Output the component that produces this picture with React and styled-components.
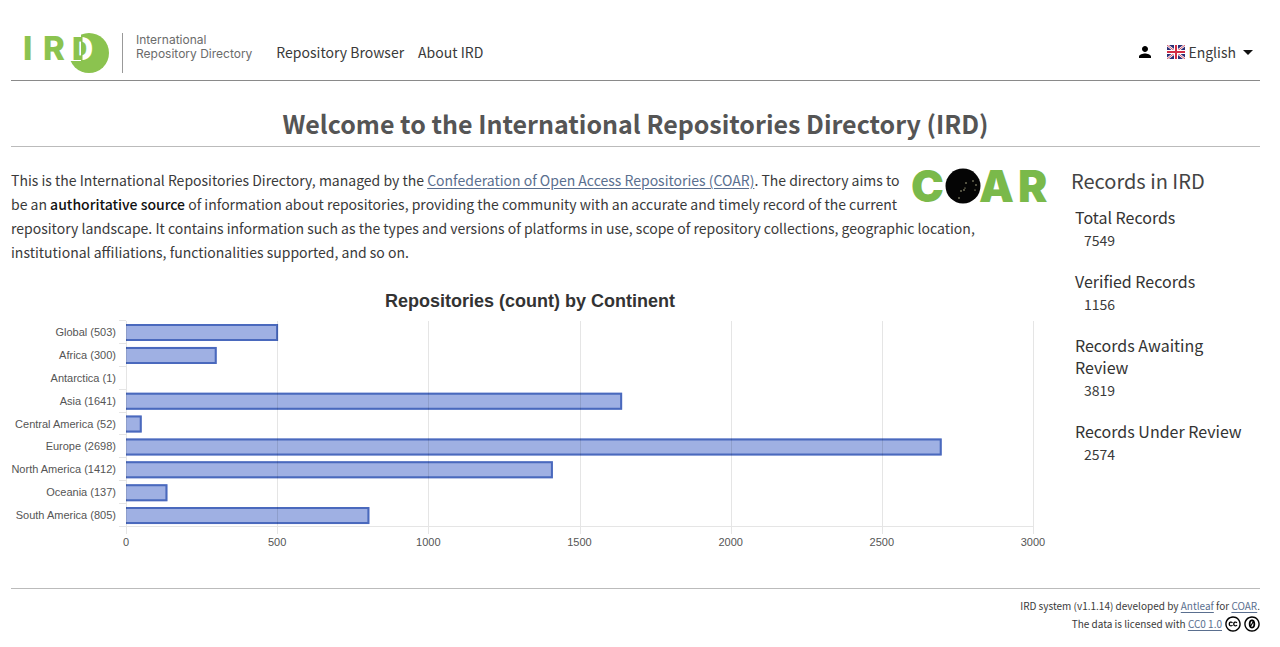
import styled, { createGlobalStyle } from "styled-components";
import { MdPerson } from "react-icons/md";
import { FaCreativeCommons, FaCreativeCommonsZero } from "react-icons/fa";

const continents = [
  { name: "Global", count: 503 },
  { name: "Africa", count: 300 },
  { name: "Antarctica", count: 1 },
  { name: "Asia", count: 1641 },
  { name: "Central America", count: 52 },
  { name: "Europe", count: 2698 },
  { name: "North America", count: 1412 },
  { name: "Oceania", count: 137 },
  { name: "South America", count: 805 },
];

const records = [
  { label: "Total Records", value: 7549 },
  { label: "Verified Records", value: 1156 },
  { label: "Records Awaiting Review", value: 3819 },
  { label: "Records Under Review", value: 2574 },
];

const ticks = [0, 500, 1000, 1500, 2000, 2500, 3000];

const GlobalStyle = createGlobalStyle`
  * {
    box-sizing: border-box;
  }
  body {
    margin: 0;
    background: #fff;
    color: #3a3a3a;
    font-family: "Noto Sans CJK SC", "Open Sans", sans-serif;
    font-size: 14px;
    line-height: 24px;
  }
`;

const Page = styled.div`
  padding: 24px 20px 12px 11px;
`;

const Header = styled.header`
  display: flex;
  align-items: center;
  height: 57px;
  border-bottom: 1px solid #8a8a8a;
`;

const Brand = styled.a`
  display: flex;
  align-items: center;
  margin: 0 24px 0 13px;
  color: #6b6b6b;
  text-decoration: none;
`;

const BrandName = styled.span`
  align-self: flex-start;
  padding-top: 2px;
  margin-left: 13px;
  font-family: Inter, sans-serif;
  font-size: 12px;
  line-height: 14px;
`;

const Nav = styled.nav`
  display: flex;
  gap: 14px;
`;

const NavLink = styled.a`
  color: #3a3a3a;
  text-decoration: none;
`;

const Tools = styled.div`
  display: flex;
  align-items: center;
  gap: 13px;
  margin-left: auto;
  margin-right: 7px;
`;

const ToolButton = styled.button`
  display: flex;
  align-items: center;
  gap: 3px;
  padding: 0;
  border: 0;
  background: none;
  color: #3a3a3a;
  font-family: inherit;
  font-size: 14px;
  line-height: 24px;
`;

const Caret = styled.span`
  margin-left: 4px;
  border: 5px solid transparent;
  border-top-color: #111;
  border-bottom: 0;
`;

const Title = styled.h1`
  margin: 0;
  padding: 24px 0 5px;
  border-bottom: 1px solid #bbb;
  color: #555;
  font-size: 25px;
  font-weight: 700;
  line-height: 36px;
  text-align: center;
`;

const Columns = styled.main`
  display: grid;
  grid-template-columns: 1fr 189px;
  gap: 20px;
  padding: 21px 0 27px;
`;

const Intro = styled.p`
  margin: 0 0 16px;
`;

const TextLink = styled.a`
  color: #5a6f8f;
  text-decoration: underline;
  text-underline-offset: 2px;
`;

const Strong = styled.strong`
  color: #111;
  font-weight: 500;
`;

const CoarMark = styled.svg`
  float: right;
  margin: 0 2px 10px 8px;
  overflow: visible;
`;

const IrdMark = styled.svg`
  overflow: visible;
`;

const Chart = styled.svg`
  display: block;
  width: 100%;
  font-family: "Liberation Sans", Arial, sans-serif;
  font-size: 11px;
  fill: #555;
`;

const ChartTitle = styled.text`
  font-size: 18px;
  font-weight: 700;
  fill: #333;
`;

const SideTitle = styled.h2`
  margin: 0 0 12px;
  color: #444;
  font-size: 20px;
  font-weight: 400;
  line-height: 26px;
`;

const Records = styled.dl`
  margin: 0 0 0 4px;
`;

const RecordLabel = styled.dt`
  color: #333;
  font-size: 16px;
  line-height: 22px;
`;

const RecordValue = styled.dd`
  margin: 0 0 18px 9px;
`;

const Footer = styled.footer`
  padding-top: 8px;
  border-top: 1px solid #bbb;
  font-size: 10px;
  line-height: 18px;
`;

const FooterLine = styled.div`
  display: flex;
  align-items: center;
  justify-content: flex-end;
  gap: 3px;
  svg {
    color: #000;
  }
`;

const IrdLogo = () => (
  <IrdMark width="99" height="42" viewBox="0 0 99 42" fontFamily="Inter, sans-serif" fontWeight="800" fontSize="33" fill="#8bc34f">
    <defs>
      <linearGradient id="split" gradientUnits="userSpaceOnUse" x1="58" x2="59" y1="0" y2="0">
        <stop offset="0" stopColor="#8bc34f" />
        <stop offset="1" stopColor="#fff" />
      </linearGradient>
    </defs>
    <circle cx="65" cy="22" r="20" />
    <path d="M44 1h13v29H44z" fill="#fff" />
    <text x="-1" y="29">I</text>
    <text x="19" y="29">R</text>
    <text x="47" y="29" fontFamily="Noto Sans CJK SC, sans-serif" fontWeight="900" fontSize="31" fill="url(#split)">
      D
    </text>
    <path d="M98.500 2v40" stroke="#999" />
  </IrdMark>
);

const CoarLogo = () => (
  <CoarMark width="137" height="36" viewBox="0 0 137 36" fontFamily="Inter, sans-serif" fontWeight="900" fontSize="44" fill="#7ab94a">
    <text x="-1" y="34">C</text>
    <text x="67" y="34">A</text>
    <text x="106" y="34">R</text>
    <circle cx="51" cy="18" r="17.500" fill="#050505" />
    <g fill="#d8d6a8">
      <circle cx="54" cy="15" r=".7" />
      <circle cx="52" cy="22" r=".7" />
      <circle cx="49" cy="23" r=".7" />
      <circle cx="53" cy="20" r=".6" />
      <circle cx="61" cy="13" r=".7" />
      <circle cx="64" cy="17" r=".7" />
      <circle cx="63" cy="22" r=".6" />
      <circle cx="47" cy="30" r=".7" />
    </g>
  </CoarMark>
);

const Flag = () => (
  <svg width="18" height="14" viewBox="0 0 18 14">
    <path d="M0 0h18v14H0z" fill="#2b2f77" />
    <path d="M0 0l18 14M18 0L0 14" stroke="#fff" strokeWidth="2.400" />
    <path d="M0 0l18 14M18 0L0 14" stroke="#d22f45" strokeWidth=".8" />
    <path d="M9 0v14M0 7h18" stroke="#fff" strokeWidth="4" />
    <path d="M9 0v14M0 7h18" stroke="#d22f45" strokeWidth="2" />
  </svg>
);

const plot = { left: 115, top: 41, width: 907, height: 206 };
const rowHeight = plot.height / continents.length;
const toX = (value) => plot.left + (value / 3000) * plot.width;

const ContinentChart = () => (
  <Chart viewBox="0 0 1040 281" role="img" aria-label="Repositories (count) by Continent">
    <ChartTitle x="519" y="27" textAnchor="middle">
      Repositories (count) by Continent
    </ChartTitle>
    {continents.map(({ name, count }, index) => {
      const top = plot.top + index * rowHeight;
      const right = toX(count);
      return (
        <g key={name}>
          <path d={`M${plot.left - 7} ${Math.round(top) - 0.5}h7`} stroke="#e5e5e5" />
          <text x="105" y={Math.round(top + 15)} textAnchor="end">
            {name} ({count})
          </text>
          {count > 1 && (
            <>
              <rect x={plot.left} y={top + 3} width={right - plot.left} height="17" fill="#9fb0e3" />
              <path
                d={`M${plot.left} ${top + 4}H${right - 1}v15H${plot.left}`}
                fill="none"
                stroke="#4a69bd"
                strokeWidth="2"
              />
            </>
          )}
        </g>
      );
    })}
    {ticks.map((tick) => (
      <g key={tick}>
        <path
          d={`M${Math.round(toX(tick)) + 0.5} ${plot.top}v${plot.height + 7}`}
          stroke="#000"
          strokeOpacity="0.1"
        />
        <text x={toX(tick)} y="266" textAnchor="middle">
          {tick}
        </text>
      </g>
    ))}
    <path d={`M${plot.left - 7} ${plot.top + plot.height - 0.5}h${plot.width + 7}`} stroke="#e5e5e5" />
  </Chart>
);

const App = () => {
  return (
    <>
      <GlobalStyle />
      <Page>
        <Header>
          <Brand href="#">
            <IrdLogo />
            <BrandName>
              International
              <br />
              Repository Directory
            </BrandName>
          </Brand>
          <Nav>
            <NavLink href="#">Repository Browser</NavLink>
            <NavLink href="#">About IRD</NavLink>
          </Nav>
          <Tools>
            <ToolButton type="button" aria-label="Account">
              <MdPerson size={18} color="#000" />
            </ToolButton>
            <ToolButton type="button">
              <Flag />
              English
              <Caret />
            </ToolButton>
          </Tools>
        </Header>
        <Title>Welcome to the International Repositories Directory (IRD)</Title>
        <Columns>
          <section>
            <CoarLogo />
            <Intro>
              This is the International Repositories Directory, managed by the{" "}
              <TextLink href="#">Confederation of Open Access Repositories (COAR)</TextLink>. The
              directory aims to be an <Strong>authoritative source</Strong> of information about
              repositories, providing the community with an accurate and timely record of the
              current repository landscape. It contains information such as the types and versions
              of platforms in use, scope of repository collections, geographic location,
              institutional affiliations, functionalities supported, and so on.
            </Intro>
            <ContinentChart />
          </section>
          <aside>
            <SideTitle>Records in IRD</SideTitle>
            <Records>
              {records.map(({ label, value }) => (
                <div key={label}>
                  <RecordLabel>{label}</RecordLabel>
                  <RecordValue>{value}</RecordValue>
                </div>
              ))}
            </Records>
          </aside>
        </Columns>
        <Footer>
          <FooterLine>
            <span>
              IRD system (v1.1.14) developed by <TextLink href="#">Antleaf</TextLink> for{" "}
              <TextLink href="#">COAR</TextLink>.
            </span>
          </FooterLine>
          <FooterLine>
            <span>
              The data is licensed with <TextLink href="#">CC0 1.0</TextLink>
            </span>
            <FaCreativeCommons size={16} />
            <FaCreativeCommonsZero size={16} />
          </FooterLine>
        </Footer>
      </Page>
    </>
  );
};

export default App;
